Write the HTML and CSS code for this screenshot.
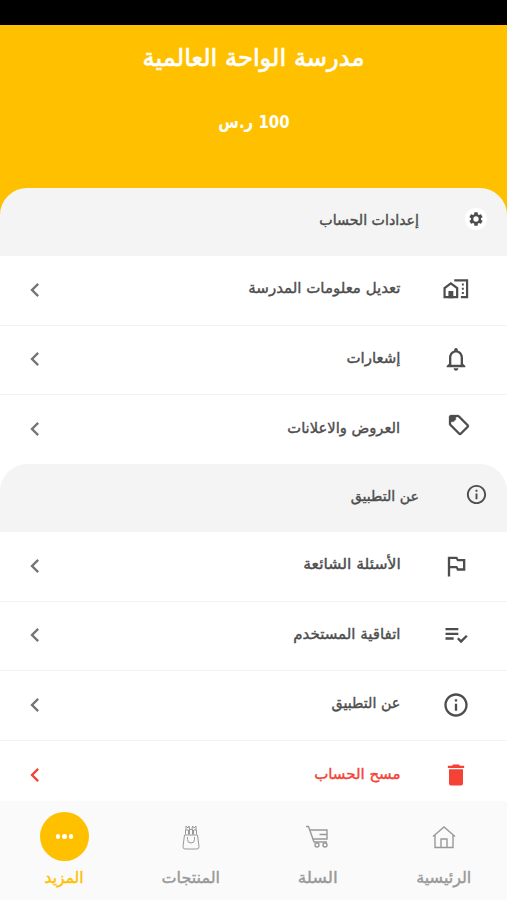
FILE: index.html
```html
<!DOCTYPE html>
<html lang="ar" dir="rtl">
<head>
<meta charset="utf-8">
<title>المزيد</title>
<link rel="stylesheet" href="styles.css">
</head>
<body>
<svg class="defs" width="0" height="0" aria-hidden="true">
  <symbol id="chevron" viewBox="0 0 24 24"><path d="M15.41 7.41 14 6l-6 6 6 6 1.41-1.41L10.83 12z"/></symbol>
  <symbol id="info" viewBox="0 0 24 24"><path d="M11 7h2v2h-2zm0 4h2v6h-2zm1-9C6.48 2 2 6.48 2 12s4.48 10 10 10 10-4.480 10-10S17.520 2 12 2zm0 18c-4.410 0-8-3.590-8-8s3.590-8 8-8 8 3.590 8 8-3.590 8-8 8z"/></symbol>
</svg>
<main class="screen">
  <div class="status"></div>
  <header class="hero">
    <h1 class="school"><span class="t">مدرسة الواحة العالمية</span></h1>
    <p class="balance"><span class="t">100 ر.س</span></p>
  </header>

  <section class="group group-account">
    <h2 class="group-head"><span class="badge"><svg viewBox="0 0 24 24"><path fill-rule="evenodd" d="M19.430 12.980c.04-.320.07-.640.07-.980s-.03-.660-.07-.980l2.110-1.650c.190-.150.240-.420.120-.640l-2-3.460c-.120-.220-.390-.300-.610-.220l-2.490 1c-.520-.400-1.080-.730-1.690-.980l-.380-2.650A.488.488 0 0 0 14 2h-4c-.250 0-.460.180-.490.420l-.380 2.650c-.610.250-1.170.590-1.690.980l-2.490-1c-.230-.090-.490 0-.610.220l-2 3.460c-.130.220-.070.490.120.640l2.110 1.650c-.04.320-.07.650-.07.980s.03.660.07.980l-2.110 1.650c-.190.150-.240.420-.120.640l2 3.460c.120.220.390.300.610.220l2.490-1c.520.400 1.080.730 1.690.980l.380 2.650c.03.240.240.420.490.420h4c.250 0 .460-.180.490-.420l.380-2.650c.610-.250 1.170-.590 1.690-.980l2.490 1c.230.090.490 0 .610-.220l2-3.460c.120-.220.070-.490-.120-.640zM12 8a4 4 0 1 0 0 8 4 4 0 0 0 0-8z"/></svg></span><span class="t">إعدادات الحساب</span></h2>
    <a class="row"><svg class="icon" viewBox="0 0 24 24"><path class="line" d="M10.500 3.800H21.500V18.100H16.200M2.200 18.100V10.300L7.600 6.300 13 10.300V18.100z"/><path d="M5.500 12.800h4.200V19H5.500zM17 6.400h1.700v1.700H17zM17 10.100h1.700v1.700H17zM17 13.800h1.700v1.700H17z"/></svg><span class="label"><span class="t">تعديل معلومات المدرسة</span></span><svg class="chev"><use href="#chevron"/></svg></a>
    <a class="row"><svg class="icon" viewBox="0 0 24 24"><path d="M12 22c1.100 0 2-.9 2-2h-4c0 1.100.9 2 2 2zm6-6v-5c0-3.070-1.630-5.640-4.500-6.320V4c0-.830-.670-1.500-1.500-1.500s-1.500.670-1.500 1.500v.680C7.640 5.360 6 7.920 6 11v5l-2 2v1h16v-1l-2-2zm-2 1H8v-6c0-2.480 1.510-4.500 4-4.500s4 2.020 4 4.500v6z"/></svg><span class="label"><span class="t">إشعارات</span></span><svg class="chev"><use href="#chevron"/></svg></a>
    <a class="row"><svg class="icon icon-tag" viewBox="0 0 24 24"><path d="m21.410 11.580-9-9C12.050 2.220 11.550 2 11 2H4c-1.100 0-2 .9-2 2v7c0 .550.220 1.050.590 1.420l9 9c.360.360.860.580 1.410.580s1.050-.220 1.410-.590l7-7c.370-.360.590-.860.590-1.410s-.230-1.060-.590-1.420zM13 20.010 4 11V4h7v-.010l9 9-7 7.020z"/><path d="M4 4h4.800v2.500L6.500 8.800H4z"/></svg><span class="label"><span class="t offers">العروض والاعلانات</span></span><svg class="chev"><use href="#chevron"/></svg></a>
  </section>

  <section class="group group-app">
    <h2 class="group-head"><svg class="head-icon"><use href="#info"/></svg><span class="t">عن التطبيق</span></h2>
    <a class="row"><svg class="icon" viewBox="0 0 24 24"><path d="m14 6-1-2H5v17h2v-7h5l1 2h7V6h-6zm4 8h-4l-1-2H7V6h5l1 2h5v6z"/></svg><span class="label"><span class="t faq">الأسئلة الشائعة</span></span><svg class="chev"><use href="#chevron"/></svg></a>
    <a class="row"><svg class="icon" viewBox="0 0 24 24"><path d="M3 10h11v2H3zm0-4h11v2H3zm0 8h7v2H3zm17.590-2.070-4.250 4.240-2.120-2.120-1.410 1.410L16.340 19 22 13.340z"/></svg><span class="label"><span class="t">اتفاقية المستخدم</span></span><svg class="chev"><use href="#chevron"/></svg></a>
    <a class="row"><svg class="icon"><use href="#info"/></svg><span class="label"><span class="t about">عن التطبيق</span></span><svg class="chev"><use href="#chevron"/></svg></a>
    <a class="row danger"><svg class="icon" viewBox="0 0 24 24"><path d="M6 19c0 1.100.9 2 2 2h8c1.100 0 2-.9 2-2V7H6v12zM19 4h-3.500l-1-1h-5l-1 1H5v2h14V4z"/></svg><span class="label"><span class="t">مسح الحساب</span></span><svg class="chev"><use href="#chevron"/></svg></a>
  </section>

  <nav class="tabs">
    <a class="tab"><span class="tab-icon"><svg viewBox="0 0 24 24"><path d="M1 11.500 12 2l11 9.500M3 10v12.500h18V10M9 22.500v-8.500h6v8.500"/></svg></span><span class="t">الرئيسية</span></a>
    <a class="tab"><span class="tab-icon"><svg viewBox="0 0 24 24"><path d="M1 1.500h2.500L9 17h13M5 5h17v9H8M22 9.500h-7.500"/><circle cx="12" cy="20" r="2"/><circle cx="20" cy="20" r="2"/></svg></span><span class="t cart">السلة</span></a>
    <a class="tab"><span class="tab-icon"><svg class="bag" viewBox="0 0 18 26"><path d="M2.500 11h13l1.500 11.500q.2 2.500-2 2.500H3q-2.200 0-2-2.500zM5.500 13v2.500a3.500 3.500 0 0 0 7 0V13M3.500 10.500V6h3v4.500M7.500 10.500V5.500h3v5M11.500 10.500V6h3v4.500M4 6V2l2 2 1-2 .8 4M10 5.500l.5-3.500 1.500 2 2-2v4"/></svg></span><span class="t">المنتجات</span></a>
    <a class="tab active"><span class="tab-icon"><i></i><i></i><i></i></span><span class="t more">المزيد</span></a>
  </nav>
</main>
</body>
</html>
```
FILE: styles.css
```css
* { box-sizing: border-box; }
body {
  margin: 0;
  background: #fff;
  color: #4d4d4d;
  font-family: "DejaVu Sans", sans-serif;
  -webkit-text-stroke: 0.4px currentColor;
}
.defs { position: absolute; }
svg { fill: currentColor; flex: none; }
.line { fill: none; stroke: currentColor; stroke-width: 1.9; }
.t { display: inline-block; white-space: nowrap; }
.screen {
  display: flex;
  flex-direction: column;
  height: 900px;
  overflow: hidden;
}
.status { height: 25px; background: #000; flex: none; }
.hero {
  height: 163px;
  flex: none;
  background: #ffc000;
  color: #fff;
  text-align: center;
}
.school { margin: 0; padding-top: 15px; font-size: 24.2px; font-weight: normal; line-height: 36px; -webkit-text-stroke-width: 0.7px; }
.balance { margin: 0; padding-top: 29px; font-size: 18px; font-weight: bold; line-height: 34px; -webkit-text-stroke-width: 0; }
.balance .t { transform: scaleX(0.83); }
.group { flex: none; }
.group-account { height: 276px; background: linear-gradient(#ffc000 34px, #fff 34px); }
.group-app { height: 337px; }
.group-head {
  display: flex;
  align-items: center;
  height: 68px;
  margin: 0;
  padding: 0 20px 4px;
  border-radius: 27px 27px 0 0;
  background: #f4f4f4;
  font-size: 14.2px;
  font-weight: normal;
  gap: 46px;
}
.badge {
  display: flex;
  align-items: center;
  justify-content: center;
  width: 22px;
  height: 22px;
  margin-bottom: 3px;
  border-radius: 50%;
  background: #fff;
}
.badge svg { width: 16px; height: 16px; }
.head-icon { width: 23px; height: 23px; margin: 0 -1px 3px 0; }
.row {
  display: flex;
  align-items: center;
  height: 69.6px;
  padding: 0 37.500px 1px 21px;
  border-bottom: 1px solid #f2f2f2;
  background: #fff;
}
.row:last-child { border-bottom: 0; }
.group-account .row:last-child { height: 68.8px; }
.icon { width: 28px; height: 28px; }
.icon-tag { width: 24px; height: 24px; margin: -8px -1px 0 5px; stroke: currentColor; stroke-width: 0.3; }
.label { flex: 1; padding: 0 41px 3px 0; font-size: 15px; }
.label .t { transform-origin: right; }
.offers { transform: scaleX(0.98); }
.faq { transform: scaleX(1.04); }
.about { transform: scaleX(0.95); }
.chev { width: 28px; height: 28px; color: #757575; }
.danger, .danger .chev { color: #f44336; }
.tabs {
  display: grid;
  grid-template-columns: repeat(4, 126.500px);
  height: 99px;
  flex: none;
  position: relative;
  background: #fafafa;
  color: #999;
}
.tab {
  display: flex;
  flex-direction: column;
  align-items: center;
  padding-top: 11px;
  font-size: 16px;
  line-height: 24px;
  gap: 5px;
}
.cart { transform: scaleX(1.07); }
.more { transform: scaleX(0.97); }
.tab-icon {
  display: flex;
  align-items: center;
  justify-content: center;
  width: 49px;
  height: 49px;
  border-radius: 50%;
  gap: 2px;
}
.tab-icon svg { width: 24px; height: 24px; fill: none; stroke: currentColor; stroke-width: 1.4; }
.tab-icon .bag { width: 18px; height: 26px; stroke-width: 1; }
.active { color: #ffc000; }
.active .tab-icon { background: #ffc000; }
.tab-icon i { width: 4.5px; height: 4.5px; border-radius: 50%; background: #fff; }
```
